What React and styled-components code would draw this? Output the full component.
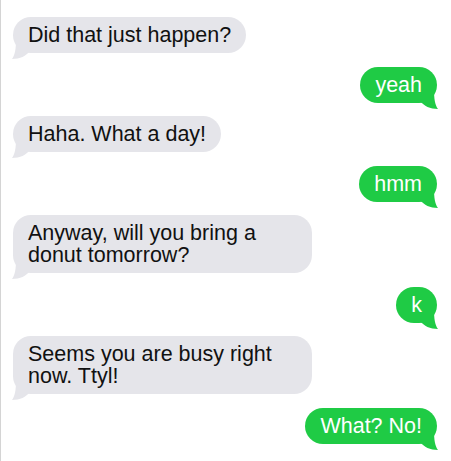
import React from "react";
import styled, { createGlobalStyle } from "styled-components";

const Global = createGlobalStyle`
  html, body { margin: 0; padding: 0; background: #fff; }
  body { font-family: "Liberation Sans", Arial, sans-serif; }
`;

const Thread = styled.div`
  box-sizing: border-box;
  min-height: 100vh;
  border-left: 1px solid #d4d4d4;
  padding: 17px 14px 12px 12px;
  display: flex;
  flex-direction: column;
  gap: 13.5px;
`;

const GRAY = "#e5e5ea";
const GREEN = "#1fcb45";

const Bubble = styled.div`
  position: relative;
  align-self: ${(p) => (p.$me ? "flex-end" : "flex-start")};
  max-width: 70.5%;
  width: fit-content;
  box-sizing: border-box;
  padding: 7px 15px;
  border-radius: 18px;
  font-size: 21.5px;
  line-height: 22px;
  background: ${(p) => (p.$me ? GREEN : GRAY)};
  color: ${(p) => (p.$me ? "#fff" : "#111")};
`;

const Tail = styled.svg`
  position: absolute;
  bottom: -6px;
  ${(p) => (p.$me ? "right: -1px; transform: scaleX(-1);" : "left: -1px;")}
  width: 19px;
  height: 20px;
  overflow: visible;
`;

const Text = styled.span`
  position: relative;
`;

function Message({ me, children }) {
  return (
    <Bubble $me={me}>
      <Tail $me={me} viewBox="0 0 19 20" aria-hidden="true">
        <path
          d="M4 0 C4 10 3 16 0 20 C8 20 14 17 18 12 L18 0 Z"
          fill={me ? GREEN : GRAY}
        />
      </Tail>
      <Text>{children}</Text>
    </Bubble>
  );
}

const messages = [
  { me: false, text: "Did that just happen?" },
  { me: true, text: "yeah" },
  { me: false, text: "Haha. What a day!" },
  { me: true, text: "hmm" },
  { me: false, text: "Anyway, will you bring a donut tomorrow?" },
  { me: true, text: "k" },
  { me: false, text: "Seems you are busy right now. Ttyl!" },
  { me: true, text: "What? No!" },
];

export default function App() {
  return (
    <>
      <Global />
      <Thread>
        {messages.map((m, i) => (
          <Message key={i} me={m.me}>
            {m.text}
          </Message>
        ))}
      </Thread>
    </>
  );
}
